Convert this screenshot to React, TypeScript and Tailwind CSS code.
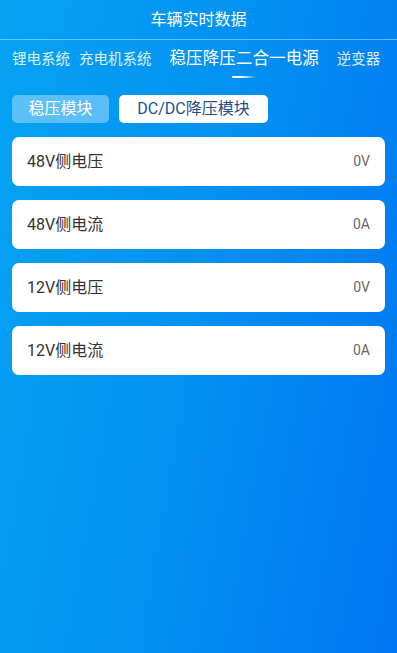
import React from "react";

const tabs = ["锂电系统", "充电机系统", "稳压降压二合一电源", "逆变器"];

const rows = [
  { label: "48V侧电压", value: "0V" },
  { label: "48V侧电流", value: "0A" },
  { label: "12V侧电压", value: "0V" },
  { label: "12V侧电流", value: "0A" },
];

export default function App() {
  return (
    <div
      className="h-[653px] w-[397px] overflow-hidden bg-[linear-gradient(100deg,#05a3f2_0%,#0390f2_50%,#0077f2_100%)] text-white"
      style={{ fontFamily: 'Roboto, "Noto Sans CJK SC", "Noto Sans", sans-serif' }}
    >
      <header className="flex h-10 items-center justify-center border-b border-white/40 text-[16px]">
        车辆实时数据
      </header>

      <nav className="flex h-[46px] items-start pt-[7px]">
        <div className="flex w-full items-center whitespace-nowrap">
          <span className="ml-3 text-[14.5px] text-white/85">{tabs[0]}</span>
          <span className="ml-[9px] text-[14.5px] text-white/85">{tabs[1]}</span>
          <div className="relative ml-[18px]">
            <span className="text-[16.6px]">{tabs[2]}</span>
            <span className="absolute left-1/2 top-[29px] h-[2px] w-[24px] -translate-x-1/2 rounded-full bg-[linear-gradient(90deg,#ffffff_40%,#ffffff00)]" />
          </div>
          <span className="ml-[18px] text-[14.5px] text-white/85">{tabs[3]}</span>
        </div>
      </nav>

      <div className="flex gap-[10px] px-3 pt-[9px]">
        <button className="flex h-[28px] w-[97px] items-center justify-center rounded-[5px] bg-white/35 text-[16px] text-white">
          稳压模块
        </button>
        <button className="flex h-[28px] w-[149px] items-center justify-center rounded-[5px] bg-white text-[16px] text-[#1d4f8f]">
          DC/DC降压模块
        </button>
      </div>

      <div className="flex flex-col gap-[14px] px-3 pt-[14px]">
        {rows.map((r) => (
          <div
            key={r.label}
            className="flex h-[49px] items-center justify-between rounded-[7px] bg-white pl-[15px] pr-[15px]"
          >
            <span className="text-[16px] text-[#333]">{r.label}</span>
            <span className="text-[14px] text-[#666]">{r.value}</span>
          </div>
        ))}
      </div>
    </div>
  );
}
